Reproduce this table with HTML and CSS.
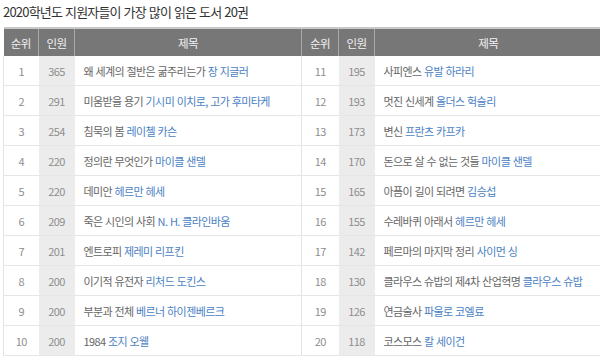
FILE: index.html
```html
<!DOCTYPE html>
<html lang="ko">
<head>
<meta charset="utf-8">
<link rel="stylesheet" href="styles.css">
</head>
<body>
<h1 class="title">2020학년도 지원자들이 가장 많이 읽은 도서 20권</h1>
<table class="books">
  <colgroup>
    <col class="c-rank"><col class="c-num"><col class="c-book">
    <col class="c-rank2"><col class="c-num"><col class="c-book">
  </colgroup>
  <thead>
    <tr><th>순위</th><th>인원</th><th>제목</th><th class="split">순위</th><th>인원</th><th>제목</th></tr>
  </thead>
  <tbody>
    <tr><td class="rank">1</td><td class="num">365</td><td class="book">왜 세계의 절반은 굶주리는가 <span class="author">장 지글러</span></td><td class="rank split">11</td><td class="num">195</td><td class="book">사피엔스 <span class="author">유발 하라리</span></td></tr>
    <tr><td class="rank">2</td><td class="num">291</td><td class="book">미움받을 용기 <span class="author">기시미 이치로, 고가 후미타케</span></td><td class="rank split">12</td><td class="num">193</td><td class="book">멋진 신세계 <span class="author">올더스 헉슬리</span></td></tr>
    <tr><td class="rank">3</td><td class="num">254</td><td class="book">침묵의 봄 <span class="author">레이첼 카슨</span></td><td class="rank split">13</td><td class="num">173</td><td class="book">변신 <span class="author">프란츠 카프카</span></td></tr>
    <tr><td class="rank">4</td><td class="num">220</td><td class="book">정의란 무엇인가 <span class="author">마이클 샌델</span></td><td class="rank split">14</td><td class="num">170</td><td class="book">돈으로 살 수 없는 것들 <span class="author">마이클 샌델</span></td></tr>
    <tr><td class="rank">5</td><td class="num">220</td><td class="book">데미안 <span class="author">헤르만 헤세</span></td><td class="rank split">15</td><td class="num">165</td><td class="book">아픔이 길이 되려면 <span class="author">김승섭</span></td></tr>
    <tr><td class="rank">6</td><td class="num">209</td><td class="book">죽은 시인의 사회 <span class="author">N. H. 클라인바움</span></td><td class="rank split">16</td><td class="num">155</td><td class="book">수레바퀴 아래서 <span class="author">헤르만 헤세</span></td></tr>
    <tr><td class="rank">7</td><td class="num">201</td><td class="book">엔트로피 <span class="author">제레미 리프킨</span></td><td class="rank split">17</td><td class="num">142</td><td class="book">페르마의 마지막 정리 <span class="author">사이먼 싱</span></td></tr>
    <tr><td class="rank">8</td><td class="num">200</td><td class="book">이기적 유전자 <span class="author">리처드 도킨스</span></td><td class="rank split">18</td><td class="num">130</td><td class="book">클라우스 슈밥의 제4차 산업혁명 <span class="author">클라우스 슈밥</span></td></tr>
    <tr><td class="rank">9</td><td class="num">200</td><td class="book">부분과 전체 <span class="author">베르너 하이젠베르크</span></td><td class="rank split">19</td><td class="num">126</td><td class="book">연금술사 <span class="author">파울로 코엘료</span></td></tr>
    <tr><td class="rank">10</td><td class="num">200</td><td class="book">1984 <span class="author">조지 오웰</span></td><td class="rank split">20</td><td class="num">118</td><td class="book">코스모스 <span class="author">칼 세이건</span></td></tr>
  </tbody>
</table>
</body>
</html>
```
FILE: styles.css
```css
html, body {
  margin: 0;
  padding: 0;
  background: #fff;
}
body {
  padding: 0 0 0 3px;
  font-family: "Noto Sans CJK KR", "Noto Sans", sans-serif;
}
.title {
  margin: 0;
  padding-top: 2px;
  height: 25px;
  font-size: 13px;
  font-weight: normal;
  line-height: 19px;
  color: #333;
  letter-spacing: -0.8px;
}
.books {
  border-collapse: collapse;
  table-layout: fixed;
  width: 597px;
  font-size: 11px;
  letter-spacing: -0.6px;
}
.c-rank { width: 35px; }
.c-num { width: 36px; }
.c-rank2 { width: 37px; }
.c-book { width: 227px; }
.books th {
  height: 27px;
  padding: 0;
  background: #777;
  color: #f2f2f2;
  font-weight: normal;
  font-size: 11.5px;
  border-top: 2px solid #c8c8c8;
  border-left: 1px solid #a8a8a8;
  text-align: center;
}
.books th:first-child { border-left: none; }
.books td {
  height: 29px;
  padding: 0;
  border-bottom: 1px solid #e6e6e6;
  vertical-align: middle;
}
.books td:first-child { border-left: 1px solid #e3e3e3; }
.rank, .num {
  text-align: center;
  color: #8e8e8e;
}
.num { background: #ececec; }
.split { border-left: 1px solid #e3e3e3; }
.book {
  padding-left: 9px !important;
  color: #666;
  white-space: nowrap;
}
.author { color: #4b7fc4; }
```
